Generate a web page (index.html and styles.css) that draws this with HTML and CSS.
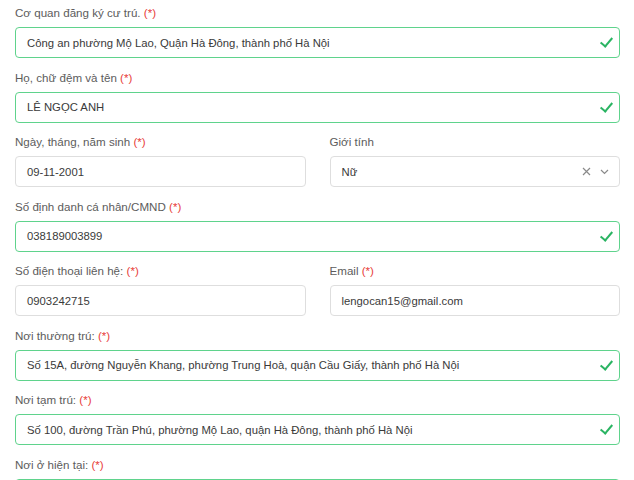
FILE: index.html
```html
<!DOCTYPE html>
<html lang="vi">
<head>
    <meta charset="UTF-8">
    <meta name="viewport" content="width=device-width, initial-scale=1.0">
    <title>Thông tin cư trú</title>
    <link rel="stylesheet" href="styles.css">
</head>
<body>
    <div class="form">
        <div class="field">
            <div class="label">Cơ quan đăng ký cư trú. <span class="req">(*)</span></div>
            <div class="input valid">Công an phường Mộ Lao, Quận Hà Đông, thành phố Hà Nội<span class="check"></span></div>
        </div>
        <div class="field">
            <div class="label">Họ, chữ đệm và tên <span class="req">(*)</span></div>
            <div class="input valid">LÊ NGỌC ANH<span class="check"></span></div>
        </div>
        <div class="row">
            <div class="field">
                <div class="label">Ngày, tháng, năm sinh <span class="req">(*)</span></div>
                <div class="input">09-11-2001</div>
            </div>
            <div class="field">
                <div class="label">Giới tính</div>
                <div class="input select">Nữ
                    <span class="select-icons">
                        <svg width="9" height="9" viewBox="0 0 9 9"><path d="M1 1 L8 8 M8 1 L1 8" stroke="#8a8a8a" stroke-width="1.2" fill="none"/></svg>
                        <svg width="9" height="6" viewBox="0 0 9 6"><path d="M1 1 L4.5 4.5 L8 1" stroke="#8a8a8a" stroke-width="1.2" fill="none"/></svg>
                    </span>
                </div>
            </div>
        </div>
        <div class="field">
            <div class="label">Số định danh cá nhân/CMND <span class="req">(*)</span></div>
            <div class="input valid">038189003899<span class="check"></span></div>
        </div>
        <div class="row">
            <div class="field">
                <div class="label">Số điện thoại liên hệ: <span class="req">(*)</span></div>
                <div class="input">0903242715</div>
            </div>
            <div class="field">
                <div class="label">Email <span class="req">(*)</span></div>
                <div class="input">lengocan15@gmail.com</div>
            </div>
        </div>
        <div class="field">
            <div class="label">Nơi thường trú: <span class="req">(*)</span></div>
            <div class="input valid">Số 15A, đường Nguyễn Khang, phường Trung Hoà, quận Cầu Giấy, thành phố Hà Nội<span class="check"></span></div>
        </div>
        <div class="field">
            <div class="label">Nơi tạm trú: <span class="req">(*)</span></div>
            <div class="input valid">Số 100, đường Trần Phú, phường Mộ Lao, quận Hà Đông, thành phố Hà Nội<span class="check"></span></div>
        </div>
        <div class="field">
            <div class="label">Nơi ở hiện tại: <span class="req">(*)</span></div>
            <div class="input valid"><span class="check"></span></div>
        </div>
    </div>
</body>
</html>
```

FILE: styles.css
```css
body {
    margin: 0;
    background-color: #fff;
    font-family: "Liberation Sans", Arial, sans-serif;
    font-size: 11.6px;
    overflow: hidden;
}

.form {
    padding: 4px 14px 0 15px;
}
.row {
    display: flex;
    gap: 24px;
}
.row .field {
    flex: 1;
}
.field {
    margin-bottom: 10.5px;
}
.label {
    color: #5c5c5c;
    line-height: 18px;
    margin-bottom: 5px;
}
.req {
    color: #e8403a;
}

.input {
    position: relative;
    display: flex;
    align-items: center;
    height: 31px;
    box-sizing: border-box;
    padding: 0 11px;
    border: 1px solid #dedede;
    border-radius: 4px;
    color: #3a3a3a;
    font-size: 11.3px;
    white-space: nowrap;
}
.input.valid {
    border-color: #5fd38c;
}
.check {
    position: absolute;
    right: 9px;
    top: 7px;
    width: 5px;
    height: 10px;
    border-right: 2.5px solid #2bb463;
    border-bottom: 2.5px solid #2bb463;
    transform: rotate(40deg);
}
.select {
    justify-content: space-between;
    padding-right: 10px;
}
.select-icons {
    display: flex;
    align-items: center;
    gap: 9px;
}
```
